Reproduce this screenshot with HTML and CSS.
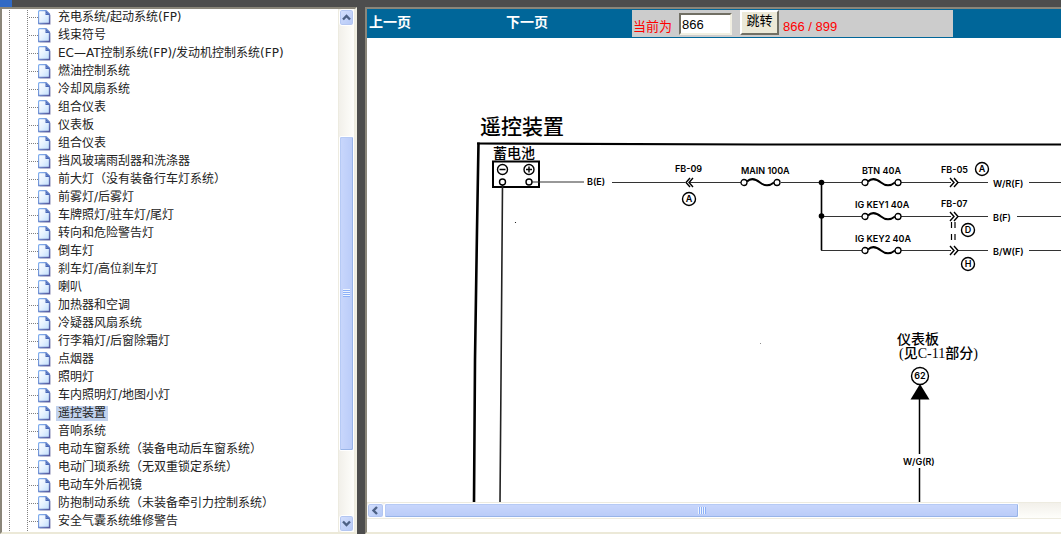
FILE: index.html
```html
<!DOCTYPE html>
<html lang="zh-CN">
<head>
<meta charset="utf-8">
<title>遥控装置</title>
<link rel="stylesheet" href="styles.css">
</head>
<body>
<svg class="defs" aria-hidden="true">
  <defs>
    <linearGradient id="paper" x1="0" y1="0" x2="1" y2="1">
      <stop offset="0" stop-color="#ffffff"/><stop offset="0.5" stop-color="#e6f2ff"/><stop offset="1" stop-color="#bcdcfc"/>
    </linearGradient>
    <linearGradient id="edge" x1="0" y1="0" x2="1" y2="1">
      <stop offset="0" stop-color="#86b4f2"/><stop offset="0.5" stop-color="#6f8fd2"/><stop offset="1" stop-color="#55589c"/>
    </linearGradient>
    <symbol id="page" viewBox="0 0 13 15">
      <path d="M1.500 14.500H12.500V5" fill="none" stroke="#d6d7e4"/>
      <path d="M1.500 .5H8L11.500 4V13.500H.5V1.500Z" fill="url(#paper)" stroke="url(#edge)" stroke-width="1.300"/>
      <path d="M7.500 0.500L12 5H7.500Z" fill="#4a68b8"/>
      <path d="M8.500 3L9.500 4H8.500Z" fill="#a9c6f5"/>
    </symbol>
    <symbol id="fuse" viewBox="0 0 42 14">
      <circle cx="4" cy="7" r="3" fill="#fff" stroke="#000" stroke-width="1.3"/>
      <circle cx="37" cy="7" r="3" fill="#fff" stroke="#000" stroke-width="1.3"/>
      <path d="M7 6C11 2 15 3 20 7S29 11 34 7" fill="none" stroke="#000" stroke-width="2"/>
    </symbol>
  </defs>
</svg>
<header class="topbar"><div class="topbar-mark"></div></header>
<main class="frames">
  <nav class="frame tree-frame">
    <div class="tree-view">
      <ul class="tree">
        <li><a href="#"><svg><use href="#page"/></svg><span>充电系统/起动系统(FP)</span></a></li>
        <li><a href="#"><svg><use href="#page"/></svg><span>线束符号</span></a></li>
        <li><a href="#"><svg><use href="#page"/></svg><span>EC—AT控制系统(FP)/发动机控制系统(FP)</span></a></li>
        <li><a href="#"><svg><use href="#page"/></svg><span>燃油控制系统</span></a></li>
        <li><a href="#"><svg><use href="#page"/></svg><span>冷却风扇系统</span></a></li>
        <li><a href="#"><svg><use href="#page"/></svg><span>组合仪表</span></a></li>
        <li><a href="#"><svg><use href="#page"/></svg><span>仪表板</span></a></li>
        <li><a href="#"><svg><use href="#page"/></svg><span>组合仪表</span></a></li>
        <li><a href="#"><svg><use href="#page"/></svg><span>挡风玻璃雨刮器和洗涤器</span></a></li>
        <li><a href="#"><svg><use href="#page"/></svg><span>前大灯（没有装备行车灯系统）</span></a></li>
        <li><a href="#"><svg><use href="#page"/></svg><span>前雾灯/后雾灯</span></a></li>
        <li><a href="#"><svg><use href="#page"/></svg><span>车牌照灯/驻车灯/尾灯</span></a></li>
        <li><a href="#"><svg><use href="#page"/></svg><span>转向和危险警告灯</span></a></li>
        <li><a href="#"><svg><use href="#page"/></svg><span>倒车灯</span></a></li>
        <li><a href="#"><svg><use href="#page"/></svg><span>刹车灯/高位刹车灯</span></a></li>
        <li><a href="#"><svg><use href="#page"/></svg><span>喇叭</span></a></li>
        <li><a href="#"><svg><use href="#page"/></svg><span>加热器和空调</span></a></li>
        <li><a href="#"><svg><use href="#page"/></svg><span>冷疑器风扇系统</span></a></li>
        <li><a href="#"><svg><use href="#page"/></svg><span>行李箱灯/后窗除霜灯</span></a></li>
        <li><a href="#"><svg><use href="#page"/></svg><span>点烟器</span></a></li>
        <li><a href="#"><svg><use href="#page"/></svg><span>照明灯</span></a></li>
        <li><a href="#"><svg><use href="#page"/></svg><span>车内照明灯/地图小灯</span></a></li>
        <li><a href="#" class="selected" aria-current="page"><svg><use href="#page"/></svg><span>遥控装置</span></a></li>
        <li><a href="#"><svg><use href="#page"/></svg><span>音响系统</span></a></li>
        <li><a href="#"><svg><use href="#page"/></svg><span>电动车窗系统（装备电动后车窗系统）</span></a></li>
        <li><a href="#"><svg><use href="#page"/></svg><span>电动门琐系统（无双重锁定系统）</span></a></li>
        <li><a href="#"><svg><use href="#page"/></svg><span>电动车外后视镜</span></a></li>
        <li><a href="#"><svg><use href="#page"/></svg><span>防抱制动系统（未装备牵引力控制系统）</span></a></li>
        <li><a href="#"><svg><use href="#page"/></svg><span>安全气囊系统维修警告</span></a></li>
      </ul>
    </div>
    <div class="scroll scroll-v">
      <button class="scroll-btn" type="button" aria-label="向上滚动"><svg viewBox="0 0 9 9"><path d="M1 6.500L4.500 3L8 6.500"/></svg></button>
      <div class="scroll-before"></div>
      <div class="scroll-thumb"><i class="grip"></i></div>
      <div class="scroll-after"></div>
      <button class="scroll-btn" type="button" aria-label="向下滚动"><svg viewBox="0 0 9 9"><path d="M1 2.500L4.500 6L8 2.500"/></svg></button>
    </div>
  </nav>
  <section class="frame doc-frame">
    <form class="pager">
      <a class="pager-prev" href="#">上一页</a>
      <a class="pager-next" href="#">下一页</a>
      <div class="jump">
        <label for="page-no">当前为</label>
        <input id="page-no" type="text" value="866">
        <button type="button">跳转</button>
        <span class="count">866 / 899</span>
      </div>
    </form>
    <div class="sheet">
      <svg class="diagram" viewBox="367 38 1000 464" role="img" aria-label="遥控装置电路图">
        <g fill="none" stroke="#000">
          <path d="M478.500 142.500L477 230L475 360L474 502" stroke-width="2.600"/>
          <path d="M477 143.500L760 144.500H1367" stroke-width="2.200"/>
          <rect x="493" y="161.500" width="46" height="25.500" stroke-width="2"/>
          <path d="M502.500 185L501 380L500 502" stroke-width="1.600" stroke="#222"/>
          <circle cx="502.500" cy="169.500" r="5" stroke-width="1.400"/>
          <circle cx="529" cy="169.500" r="5" stroke-width="1.400"/>
          <path d="M499.500 169.500H505.500M526 169.500H532M529 166.500V172.500" stroke-width="1.400"/>
        </g>
        <g fill="none" stroke="#333" stroke-width="1.200">
          <path d="M532 182H584M612 182.500H685M690 182.500H741M781 182.500H862M901 182.500H951M958 182.500H988M1029 182.500H1367"/>
          <path d="M821.500 216.500H862M901 216.500H951M958 216.500H988M1017 216.500H1367"/>
          <path d="M821.500 182V250.500H862M901 250.500H951M958 250.500H988M1029 250.500H1367"/>
          <path d="M821.500 182V250M919.500 398V454M919.500 468V502" stroke="#000" stroke-width="1.500"/>
          <path d="M951.500 222V228M955 222V228M951.500 234V240M955 234V240" stroke="#000"/>
          <path d="M690 178L686 182.500L690 187M693 178L689 182.500L693 187M950 178L954 182.500L950 187M954 178L958 182.500L954 187M950 212L954 216.500L950 221M954 212L958 216.500L954 221M950 246L954 250.500L950 255M954 246L958 250.500L954 255" stroke="#000" stroke-width="1.400"/>
        </g>
        <g fill="#fff" stroke="#000" stroke-width="1.400">
          <circle cx="502.500" cy="182" r="3"/><circle cx="529" cy="182" r="3"/>
          <circle cx="689" cy="199" r="6.500"/><circle cx="982" cy="169" r="6.500"/>
          <circle cx="968" cy="230" r="6.500"/><circle cx="968" cy="264" r="6.500"/>
          <circle cx="920" cy="376" r="8.500"/>
        </g>
        <circle cx="821.500" cy="182.500" r="2.800"/><circle cx="821.500" cy="216" r="2.800"/>
        <path d="M920 384L929.500 399.500H910.500Z"/>
        <circle cx="515.500" cy="222.500" r=".6"/><circle cx="760.500" cy="343.500" r=".4"/>
        <use href="#fuse" x="740" y="175.500" width="42" height="14"/>
        <use href="#fuse" x="861" y="175.500" width="42" height="14"/>
        <use href="#fuse" x="861" y="209.500" width="42" height="14"/>
        <use href="#fuse" x="861" y="243.500" width="42" height="14"/>
        <g class="dg-title"><text x="480" y="134">遥控装置</text></g>
        <g class="dg-name">
          <text x="493" y="158">蓄电池</text>
          <text x="897" y="344">仪表板</text>
          <text x="899" y="358">(见C-11部分)</text>
        </g>
        <g class="dg-code">
          <text x="587" y="185">B(E)</text>
          <text x="675" y="172">FB-09</text>
          <text x="741" y="174">MAIN 100A</text>
          <text x="862" y="174">BTN 40A</text>
          <text x="855" y="208">IG KEY1 40A</text>
          <text x="855" y="242">IG KEY2 40A</text>
          <text x="941" y="173">FB-05</text>
          <text x="941" y="207">FB-07</text>
          <text x="993" y="187">W/R(F)</text>
          <text x="993" y="221">B(F)</text>
          <text x="993" y="255">B/W(F)</text>
          <text x="903" y="465">W/G(R)</text>
          <g text-anchor="middle">
            <text x="689" y="202">A</text>
            <text x="982" y="172">A</text>
            <text x="968" y="233">D</text>
            <text x="968" y="267">H</text>
            <text x="920" y="379">62</text>
          </g>
        </g>
      </svg>
    </div>
    <div class="scroll scroll-h">
      <button class="scroll-btn" type="button" aria-label="向左滚动"><svg viewBox="0 0 9 9"><path d="M6 1L2.500 4.500L6 8"/></svg></button>
      <div class="scroll-thumb"><i class="grip"></i></div>
      <div class="scroll-after"></div>
    </div>
  </section>
</main>
</body>
</html>
```

FILE: styles.css
```css
* { box-sizing: border-box; }

body {
  margin: 0;
  height: 100vh;
  display: grid;
  grid-template-rows: 7px minmax(0, 1fr);
  overflow: hidden;
  background: #4d4d4d;
  font: 12px/16px "DejaVu Sans", "Noto Sans CJK SC", sans-serif;
  color: #222;
}

a { color: inherit; text-decoration: none; }
button, input { font: inherit; border-radius: 0; }

.defs { position: absolute; width: 0; height: 0; }
.topbar-mark { width: 12px; height: 7px; background: #316ac5; }

.frames {
  display: grid;
  grid-template-columns: 357px minmax(0, 1fr);
  column-gap: 8px;
}

.frame {
  min-height: 0;
  overflow: hidden;
  background: #fff;
  border: 2px solid;
  border-color: #8a867a #f1efe2 #ece9d8 #8a867a;
}

/* Contents tree */
.tree-frame { display: flex; }
.tree-view { flex: 1; min-width: 0; overflow: hidden; }

.tree {
  list-style: none;
  margin: -1px 0 0;
  padding: 0 0 8px;
  background:
    repeating-linear-gradient(#808080 0 1px, transparent 1px 2px) 7px 0 / 1px 100% no-repeat,
    repeating-linear-gradient(#808080 0 1px, transparent 1px 2px) 25px 0 / 1px 100% no-repeat;
}

.tree a {
  display: flex;
  align-items: center;
  height: 18px;
  padding-left: 26px;
  white-space: nowrap;
}

.tree a::before {
  content: "";
  width: 10px;
  height: 1px;
  background: repeating-linear-gradient(90deg, transparent 0 1px, #808080 1px 2px);
}

.tree svg { width: 13px; height: 15px; margin-right: 5px; }
.tree span { padding: 0 2px; line-height: 15px; }
.tree .selected span { background: #c1d2ee; }

/* Scroll bars */
.scroll { display: flex; background: #f6f5f0; }
.scroll-v {
  flex-direction: column;
  width: 17px;
  border: solid #edebe0;
  border-width: 0 1px;
  background: linear-gradient(90deg, #f2f0ea, #fefefb);
}
.scroll-h {
  height: 17px;
  border: solid #edebe0;
  border-width: 1px 0;
  background: linear-gradient(#f2f0ea, #fefefb);
}

.scroll-btn {
  flex: none;
  display: grid;
  place-items: center;
  width: 15px;
  height: 17px;
  padding: 0;
  border: 1px solid #fff;
  border-radius: 3px;
  background: linear-gradient(135deg, #d5e0fd, #b4c8f6);
  box-shadow: inset 0 0 0 1px #b3c6f1;
}
.scroll-h .scroll-btn { width: 17px; height: 15px; }
.scroll-btn svg { width: 9px; height: 9px; }
.scroll-btn path { fill: none; stroke: #4d6185; stroke-width: 2.4; }

.scroll-thumb {
  display: grid;
  place-items: center;
  border: 1px solid #fff;
  border-radius: 2px;
  background: linear-gradient(90deg, #c9d7fc, #b9cbf8);
  box-shadow: inset -1px -1px 0 #98b4e8, inset 1px 1px 0 #b6caf5;
}
.scroll-before { flex: 110; }
.scroll-v .scroll-thumb { flex: 315; }
.scroll-v .scroll-after { flex: 64; }
.scroll-h .scroll-thumb { flex: 634; background: linear-gradient(#c9d7fc, #b9cbf8); }
.scroll-h .scroll-after { flex: 42; }

.grip { width: 7px; height: 8px; background: repeating-linear-gradient(#eef4fe 0 1px, #8cb0f8 1px 2px); }
.scroll-h .grip { width: 8px; height: 7px; background: repeating-linear-gradient(90deg, #eef4fe 0 1px, #8cb0f8 1px 2px); }

/* Document frame */
.doc-frame {
  display: flex;
  flex-direction: column;
  border-right: 0;
  padding-bottom: 13px;
}

.pager {
  flex: none;
  display: flex;
  height: 29px;
  padding: 1px 0 1px 2px;
  background: #069;
}
.pager > a {
  font: bold 14px/24px "Liberation Sans", "Noto Sans CJK SC", sans-serif;
  color: #fff;
}
.pager-prev { width: 137px; }
.pager-next { width: 126px; }

.jump {
  display: flex;
  align-items: flex-start;
  width: 321px;
  padding-left: 1px;
  background: #ccc;
  color: #f00;
  font: 13px/17px "Liberation Sans", "Noto Sans CJK SC", sans-serif;
}
.jump label { width: 46px; padding-top: 8px; }
.jump input {
  width: 53px;
  height: 22px;
  margin: 3px 8px 0 0;
  padding: 0 1px;
  border: 2px solid;
  border-color: #716f64 #f1efe2 #f1efe2 #716f64;
  background: #fff;
  color: #000;
}
.jump button {
  width: 39px;
  height: 25px;
  margin-right: 4px;
  padding: 0 0 4px;
  border: 2px solid;
  border-color: #fff #716f64 #716f64 #fff;
  background: #ece9d8;
  color: #000;
}
.jump .count { padding-top: 8px; }

.sheet { flex: 1; min-height: 0; overflow: hidden; }
.diagram { display: block; width: 1000px; height: 464px; }

.dg-title { font: 500 21px "Noto Sans CJK SC", sans-serif; }
.dg-name { font: 500 14px "Liberation Serif", "Noto Sans CJK SC", sans-serif; }
.dg-code { font: 600 9px Inter, sans-serif; }
```
